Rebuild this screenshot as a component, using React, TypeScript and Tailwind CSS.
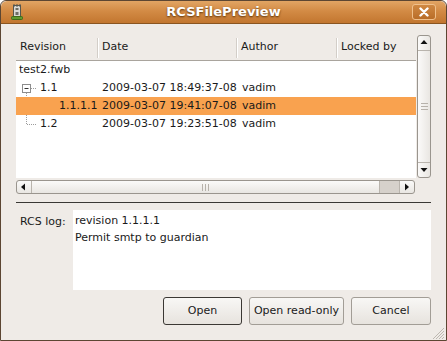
import React from 'react';

const font = { fontFamily: '"DejaVu Sans", "Liberation Sans", sans-serif' };

function TowerIcon() {
  return (
    <svg width="12" height="17" viewBox="0 0 12 17">
      <rect x="2.5" y="1.5" width="7" height="11" fill="#d9d9d4" stroke="#55574f" />
      <rect x="2" y="0.5" width="2" height="2" fill="#55574f" />
      <rect x="5" y="0.5" width="2" height="2" fill="#55574f" />
      <rect x="8" y="0.5" width="2" height="2" fill="#55574f" />
      <rect x="4.5" y="4" width="3" height="2" fill="#6c6e66" />
      <rect x="4.5" y="8" width="3" height="3" fill="#6c6e66" />
      <rect x="0.5" y="12.5" width="11" height="3" rx="1" fill="#5f9a2e" stroke="#3d6b1a" />
    </svg>
  );
}

function TitleBar() {
  return (
    <div className="flex h-[23px] items-center rounded-t-[6px] border-b border-[#8a5520] bg-[linear-gradient(#e2a564,#d38b45_45%,#c2762f)] px-[10px]">
      <div className="flex w-[24px] items-center">
        <TowerIcon />
      </div>
      <div className="flex-1 text-center text-[13px] font-bold text-white [text-shadow:0_1px_2px_#5b3309]">
        RCSFilePreview
      </div>
      <div className="flex h-[16px] w-[24px] items-center justify-center rounded-[3px] border border-[#efc08c] bg-[linear-gradient(#cf8842,#b96d28)]">
        <svg width="10" height="10" viewBox="0 0 10 10">
          <path d="M1.5 1.5 L8.5 8.5 M8.5 1.5 L1.5 8.5" stroke="#fff" strokeWidth="2.4" strokeLinecap="round" />
        </svg>
      </div>
    </div>
  );
}

function Arrow({ dir }: { dir: 'up' | 'down' | 'left' | 'right' }) {
  const paths = {
    up: 'M0.5 5 L4 1 L7.5 5 Z',
    down: 'M0.5 2 L4 6 L7.5 2 Z',
    left: 'M5 0.5 L1 4 L5 7.5 Z',
    right: 'M2 0.5 L6 4 L2 7.5 Z',
  };
  return (
    <svg width="8" height="8" viewBox="0 0 8 8">
      <path d={paths[dir]} fill="#111" />
    </svg>
  );
}

function VScroll() {
  return (
    <div className="flex w-[15px] flex-col rounded-[3px] border border-[#9a958e] bg-[linear-gradient(90deg,#fbfaf9,#e9e6e2)]">
      <div className="flex h-[15px] items-center justify-center border-b border-[#b9b4ad]">
        <Arrow dir="up" />
      </div>
      <div className="flex flex-1 flex-col items-center justify-center gap-[2px]">
        <div className="h-px w-[7px] bg-[#b7b2ab]" />
        <div className="h-px w-[7px] bg-[#b7b2ab]" />
        <div className="h-px w-[7px] bg-[#b7b2ab]" />
      </div>
      <div className="flex h-[15px] items-center justify-center border-t border-[#b9b4ad]">
        <Arrow dir="down" />
      </div>
    </div>
  );
}

function HScroll() {
  return (
    <div className="flex h-[14px] w-[399px] rounded-[3px] border border-[#9a958e] bg-[linear-gradient(#fbfaf9,#e9e6e2)]">
      <div className="flex w-[15px] items-center justify-center border-r border-[#b9b4ad]">
        <Arrow dir="left" />
      </div>
      <div className="flex flex-1 items-center justify-center gap-[2px] border-r border-[#b9b4ad]">
        <div className="h-[7px] w-px bg-[#b7b2ab]" />
        <div className="h-[7px] w-px bg-[#b7b2ab]" />
        <div className="h-[7px] w-px bg-[#b7b2ab]" />
      </div>
      <div className="w-[19px] bg-[#d6d1cb]" />
      <div className="flex w-[15px] items-center justify-center border-l border-[#b9b4ad]">
        <Arrow dir="right" />
      </div>
    </div>
  );
}

const cols = 'grid grid-cols-[82px_139px_100px_79px]';

function HeaderCell({ label, last }: { label: string; last?: boolean }) {
  return (
    <div className="flex items-center">
      <span className="flex-1 pl-[4px]">{label}</span>
      {!last && <div className="h-[20px] w-px bg-[#d3cec8] shadow-[1px_0_0_#fff]" />}
    </div>
  );
}

function ExpanderLines() {
  return (
    <svg width="24" height="18" viewBox="0 0 24 18" className="shrink-0">
      <path d="M10.5 14 V18" stroke="#9c9c9c" strokeDasharray="1 1" />
      <path d="M15 9.5 H20" stroke="#9c9c9c" strokeDasharray="1 1" />
      <rect x="6.5" y="5.5" width="8" height="8" fill="#fff" stroke="#8d8d8d" />
      <path d="M8.5 9.5 H12.5" stroke="#333" />
    </svg>
  );
}

function BranchLines() {
  return (
    <svg width="24" height="18" viewBox="0 0 24 18" className="shrink-0">
      <path d="M10.5 0 V9.5 H20" fill="none" stroke="#9c9c9c" strokeDasharray="1 1" />
    </svg>
  );
}

type Row = { rev: string; kind: 'root' | 'open' | 'child' | 'last'; date: string; author: string; selected?: boolean };

const rows: Row[] = [
  { rev: 'test2.fwb', kind: 'root', date: '', author: '' },
  { rev: '1.1', kind: 'open', date: '2009-03-07 18:49:37-08', author: 'vadim' },
  { rev: '1.1.1.1', kind: 'child', date: '2009-03-07 19:41:07-08', author: 'vadim', selected: true },
  { rev: '1.2', kind: 'last', date: '2009-03-07 19:23:51-08', author: 'vadim' },
];

function TreeRow({ row }: { row: Row }) {
  return (
    <div className={`${cols} h-[18px] items-center ${row.selected ? 'bg-[#f9a24f]' : ''}`}>
      <div className="flex items-center whitespace-nowrap">
        {row.kind === 'root' && <span className="pl-[3px]">{row.rev}</span>}
        {row.kind === 'open' && (
          <>
            <ExpanderLines />
            <span>{row.rev}</span>
          </>
        )}
        {row.kind === 'child' && <span className="pl-[43px]">{row.rev}</span>}
        {row.kind === 'last' && (
          <>
            <BranchLines />
            <span>{row.rev}</span>
          </>
        )}
      </div>
      <div className="whitespace-nowrap pl-[4px]">{row.date}</div>
      <div className="pl-[5px]">{row.author}</div>
      <div />
    </div>
  );
}

function Button({ label, width, def }: { label: string; width: string; def?: boolean }) {
  return (
    <button
      className={`flex h-[28px] ${width} items-center justify-center rounded-[3px] border bg-[linear-gradient(#f8f7f5,#e7e3de)] text-[#1a1a1a] ${
        def ? 'border-[#3b3834]' : 'border-[#a29d96]'
      }`}
    >
      {label}
    </button>
  );
}

export default function App() {
  return (
    <div
      style={font}
      className="flex h-[341px] w-[447px] flex-col overflow-hidden rounded-t-[6px] border border-[#5c4632] bg-[#efebe7] text-[11px] text-[#1a1a1a]"
    >
      <TitleBar />
      <div className="flex flex-1 flex-col px-[15px] pt-[11px]">
        <div className="flex flex-col gap-[2px]">
          <div className="flex h-[143px] gap-px">
            <div className="flex w-[400px] flex-col">
              <div className={`${cols} h-[26px] border-b border-[#a9a49d]`}>
                <HeaderCell label="Revision" />
                <HeaderCell label="Date" />
                <HeaderCell label="Author" />
                <HeaderCell label="Locked by" last />
              </div>
              <div className="flex-1 bg-white">
                {rows.map((r) => (
                  <TreeRow key={r.rev} row={r} />
                ))}
              </div>
            </div>
            <VScroll />
          </div>
          <HScroll />
        </div>
        <div className="mt-[8px] h-px bg-[#3a3835]" />
        <div className="mt-[7px] flex h-[80px]">
          <div className="w-[57px] pl-[4px] pt-[4px]">RCS log:</div>
          <div className="flex-1 bg-white pl-[2px] pt-[2px] leading-[17px]">
            <div>revision 1.1.1.1</div>
            <div>Permit smtp to guardian</div>
          </div>
        </div>
        <div className="mt-[7px] flex justify-end gap-[7px]">
          <Button label="Open" width="w-[79px]" def />
          <Button label="Open read-only" width="w-[95px]" />
          <Button label="Cancel" width="w-[80px]" />
        </div>
        <div className="-mr-[14px] flex flex-1 items-end justify-end">
          <svg width="16" height="14" viewBox="0 0 16 14">
            <path d="M15 2 L4 13 M15 5 L7 13 M15 8 L10 13 M15 11 L13 13" stroke="#bdb8b1" />
          </svg>
        </div>
      </div>
    </div>
  );
}
